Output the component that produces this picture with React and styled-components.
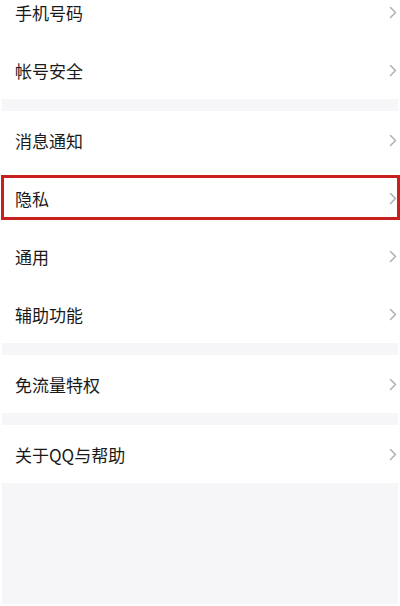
import styled, { createGlobalStyle } from "styled-components";

const GlobalStyle = createGlobalStyle`
  html, body {
    margin: 0;
    padding: 0;
    background: #ffffff;
  }
  body {
    font-family: "Noto Sans CJK SC", "Noto Sans", sans-serif;
  }
`;

const groups = [
  ["手机号码", "帐号安全"],
  ["消息通知", "隐私", "通用", "辅助功能"],
  ["免流量特权"],
  ["关于QQ与帮助"],
];

const Chevron = () => (
  <svg width="8" height="13" viewBox="0 0 8 13" fill="none">
    <path
      d="M1.5 1.5 L6.5 6.5 L1.5 11.5"
      stroke="#b0b0b4"
      strokeWidth="1.5"
      strokeLinecap="round"
      strokeLinejoin="round"
    />
  </svg>
);

export default function App() {
  return (
    <>
      <GlobalStyle />
      <Page>
        <List>
          {groups.map((group, gi) => (
            <Group key={gi}>
              {group.map((label) => (
                <Row key={label}>
                  <Label>{label}</Label>
                  <Chevron />
                  {label === "隐私" && <Highlight />}
                </Row>
              ))}
            </Group>
          ))}
          <Rest />
        </List>
      </Page>
    </>
  );
}

const Page = styled.div`
  width: 400px;
  height: 606px;
  overflow: hidden;
  background: #ffffff;
  padding: 0 2px 2px 2px;
  box-sizing: border-box;
`;

const List = styled.div`
  display: flex;
  flex-direction: column;
  gap: 12px;
  margin-top: -17px;
  height: calc(100% + 17px);
  background: #f6f6f8;
`;

const Group = styled.div`
  display: flex;
  flex-direction: column;
  background: #ffffff;
`;

const Row = styled.div`
  position: relative;
  height: 58px;
  display: flex;
  align-items: center;
  justify-content: space-between;
  padding: 0 1px 0 13px;
`;

const Label = styled.span`
  font-size: 17px;
  color: #1a1a1a;
`;

const Highlight = styled.div`
  position: absolute;
  top: 6px;
  bottom: 7px;
  left: -1px;
  right: -2px;
  border: 3px solid #c8201e;
  pointer-events: none;
`;

const Rest = styled.div`
  flex: 1;
`;
